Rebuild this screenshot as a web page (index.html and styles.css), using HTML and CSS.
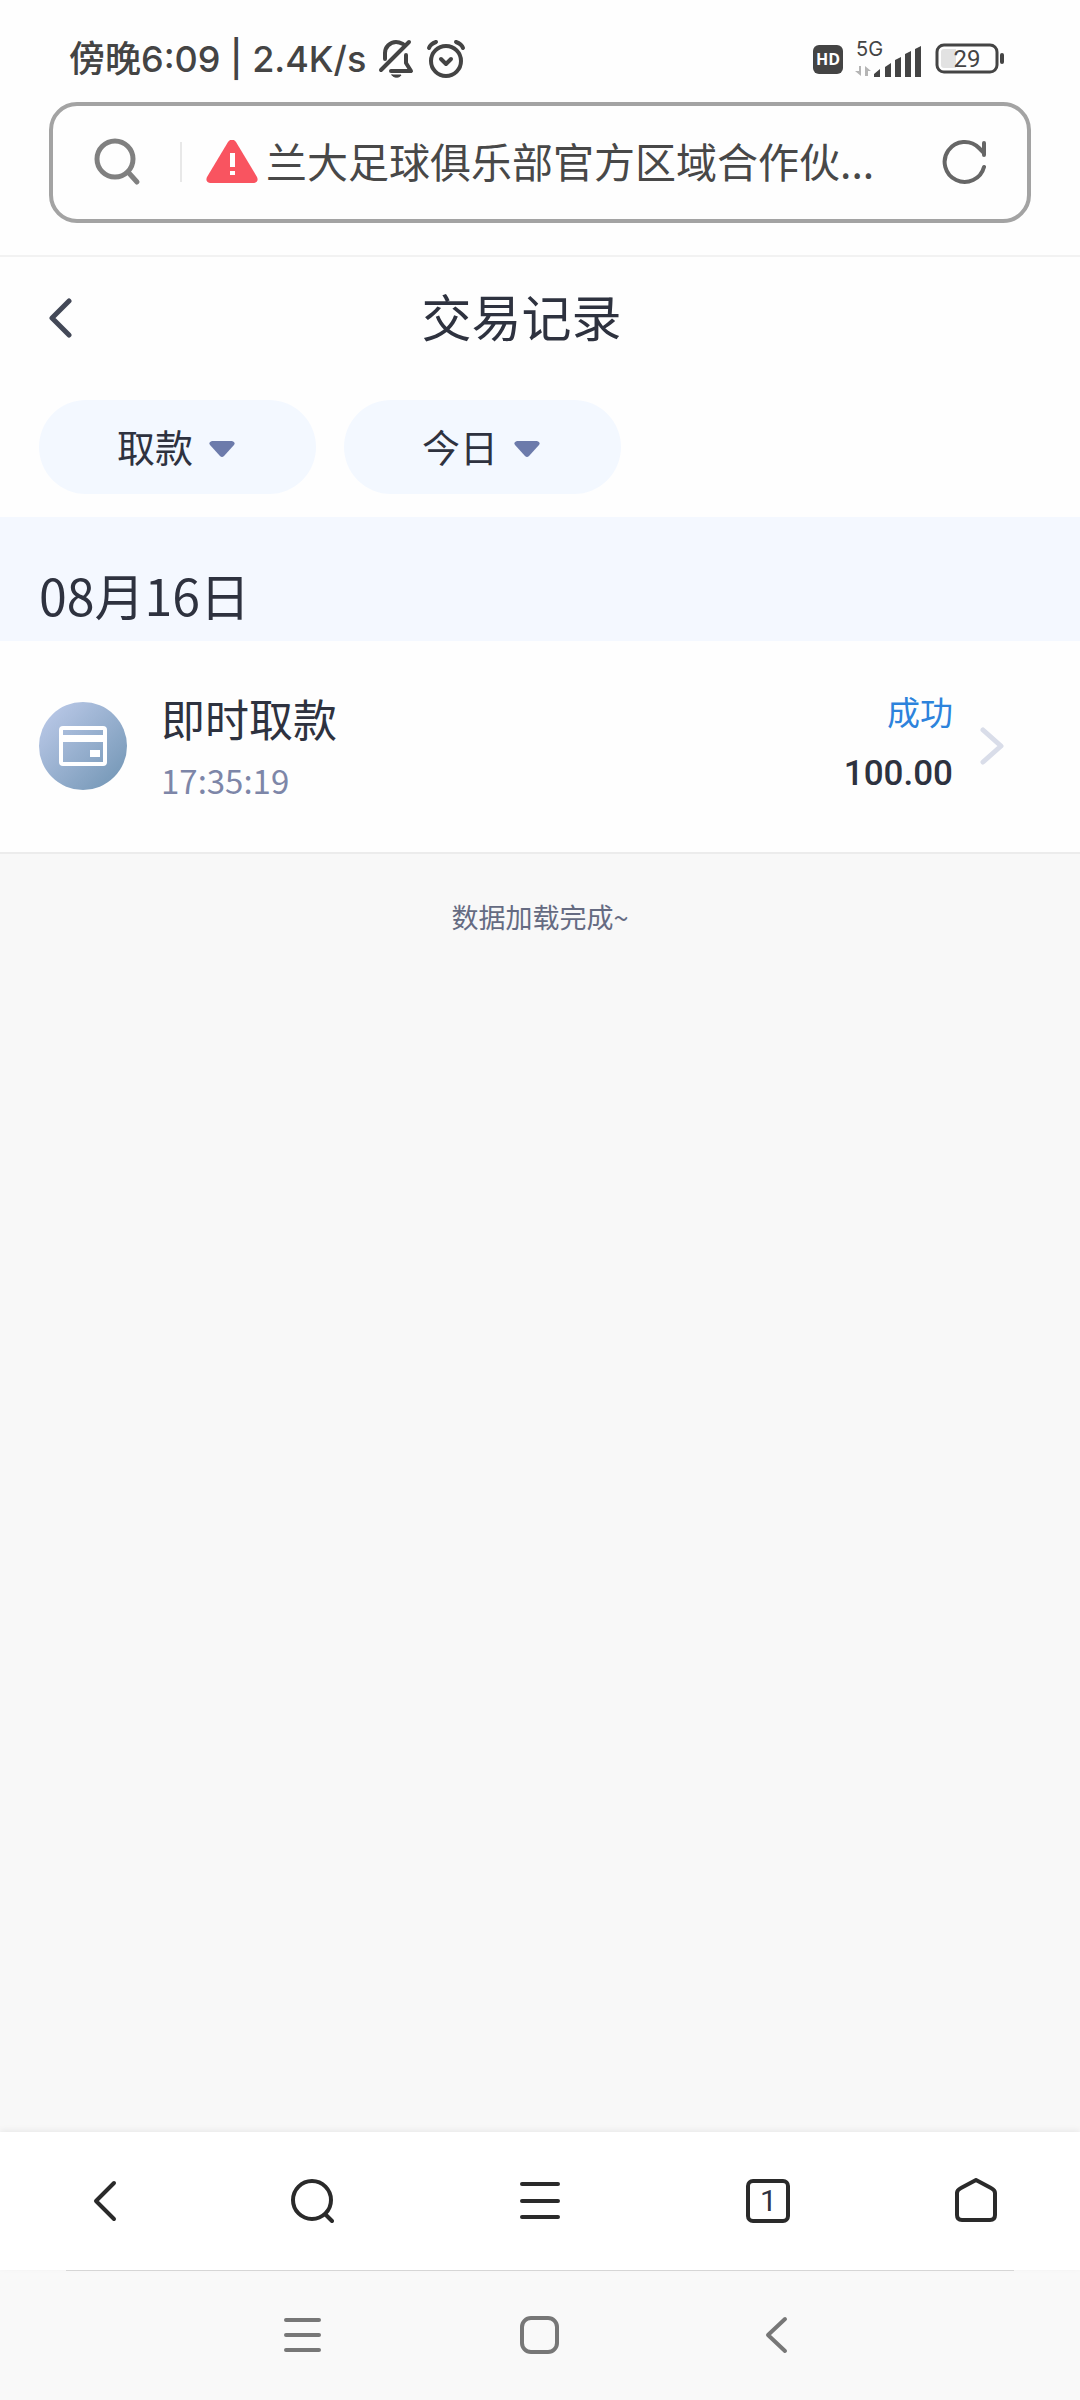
FILE: index.html
```html
<!DOCTYPE html>
<html lang="zh-CN">
<head>
<meta charset="utf-8">
<meta name="viewport" content="width=device-width, initial-scale=1">
<title>交易记录</title>
<link rel="stylesheet" href="styles.css">
</head>
<body>

<div class="status">
  <div class="status-left">
    <span>傍晚6:09 | 2.4K/s</span>
    <svg width="36" height="40" viewBox="0 0 36 40" fill="none" stroke="#444" stroke-width="4" stroke-linecap="round" stroke-linejoin="round">
      <path d="M7 20V14C7 8 12 3 18 3c3 0 5 1 7 2M28 16v8l5 8H13M3 31L31 3"/>
      <path d="M14 36h9c-1 3-8 3-9 0z" fill="#444" stroke-width="1"/>
    </svg>
    <svg width="40" height="40" viewBox="0 0 40 40" fill="none" stroke="#444" stroke-width="4" stroke-linecap="round" stroke-linejoin="round">
      <circle cx="20" cy="22" r="15"/>
      <path d="M15 20l5 5 5-5M3 9c1-3 4-5 7-6M37 9c-1-3-4-5-7-6"/>
    </svg>
  </div>
  <div class="status-right">
    <span class="hd">HD</span>
    <svg width="68" height="48" viewBox="0 -7 68 48">
      <text class="net" x="1" y="14">5G</text>
      <path d="M6 24v10L0 29h4v-5zM10 34V24l6 5h-3v5z" fill="#b5b5b5"/>
      <path d="M19 35v-3l6-5v8zM30 35V25l6-4v14zM40 35V18l6-3v20zM50 35V12l6-3v26zM60 35V7l6-3v31z" fill="#444"/>
    </svg>
    <svg width="70" height="48" viewBox="0 -8 70 48">
      <rect x="2" y="2" width="60" height="27" rx="7" fill="none" stroke="#444" stroke-width="3"/>
      <path d="M9 6h12v19H9q-3 0-3-3V9q0-3 3-3z" fill="#e2e2e2"/>
      <rect x="65" y="10" width="4" height="11" rx="2" fill="#444"/>
      <text class="power" x="32" y="24" text-anchor="middle">29</text>
    </svg>
  </div>
</div>

<div class="address">
  <svg width="48" height="48" viewBox="0 0 48 48" fill="none" stroke="#808080" stroke-width="5" stroke-linecap="round">
    <circle cx="21" cy="21" r="18"/>
    <path d="M34 34l9 10"/>
  </svg>
  <span class="bar"></span>
  <svg width="52" height="44" viewBox="0 0 52 44">
    <path d="M22 2q4-5 8 0l21 35q2 5-3 6H4q-5-1-3-6z" fill="#f95460"/>
    <path d="M24 13h5v14h-5zM24 31h5v4h-5z" fill="#fff"/>
  </svg>
  <input class="url" type="text" aria-label="网址" value="兰大足球俱乐部官方区域合作伙..." readonly>
  <button class="icon" aria-label="刷新">
    <svg width="44" height="46" viewBox="0 0 44 46" fill="none" stroke="#666" stroke-width="4" stroke-linecap="round">
      <path d="M42 28A20 20 0 1 1 37 9l5 5M42 4v12"/>
    </svg>
  </button>
</div>

<div class="header">
  <button class="icon" aria-label="返回">
    <svg width="24" height="40" viewBox="0 0 24 40" fill="none" stroke="#434857" stroke-width="5" stroke-linecap="round" stroke-linejoin="round">
      <path d="M20 3L3 20l17 17"/>
    </svg>
  </button>
  <h1>交易记录</h1>
</div>

<div class="filters">
  <div class="filter">
    <select aria-label="类型">
      <option>取款</option>
    </select>
    <svg class="caret" width="26" height="16" viewBox="0 0 26 16"><path d="M3 0h20q4 1 2 4L15 15q-2 2-4 0L1 4q-2-3 2-4z" fill="#6c7bab"/></svg>
  </div>
  <div class="filter">
    <select aria-label="日期">
      <option>今日</option>
    </select>
    <svg class="caret" width="26" height="16" viewBox="0 0 26 16"><path d="M3 0h20q4 1 2 4L15 15q-2 2-4 0L1 4q-2-3 2-4z" fill="#6c7bab"/></svg>
  </div>
</div>

<main>
  <h2>08月16日</h2>
  <a class="record" href="#">
    <svg width="88" height="88" viewBox="0 0 88 88">
      <defs>
        <linearGradient id="disc" x1="0" y1="0" x2="1" y2="1">
          <stop offset="0.1" stop-color="#b8c7e6"/>
          <stop offset="0.9" stop-color="#7799b8"/>
        </linearGradient>
      </defs>
      <circle cx="44" cy="44" r="44" fill="url(#disc)"/>
      <rect x="22" y="26" width="44" height="36" rx="2" fill="none" stroke="#fff" stroke-width="4"/>
      <path d="M22 33h44v7H22zM51 48h10v7H51z" fill="#fff"/>
    </svg>
    <div class="info">
      <div class="name">即时取款</div>
      <div class="time">17:35:19</div>
    </div>
    <div class="result">
      <div class="state">成功</div>
      <div class="amount">100.00</div>
    </div>
    <svg width="24" height="40" viewBox="0 0 24 40" fill="none" stroke="#d9dde9" stroke-width="5" stroke-linecap="round" stroke-linejoin="round">
      <path d="M3 4l18 16L3 36"/>
    </svg>
  </a>
  <p class="done">数据加载完成~</p>
</main>

<nav class="toolbar">
  <button class="icon" aria-label="后退">
    <svg width="44" height="46" viewBox="0 0 44 46"><path d="M32 5L14 23l18 18"/></svg>
  </button>
  <button class="icon" aria-label="搜索">
    <svg width="44" height="46" viewBox="0 0 44 46"><circle cx="22" cy="22" r="19"/><path d="M36 37l6 6"/></svg>
  </button>
  <button class="icon" aria-label="菜单">
    <svg width="44" height="46" viewBox="0 0 44 46"><path d="M4 6h36M4 23h36M4 39h36"/></svg>
  </button>
  <button class="icon" aria-label="标签页">
    <span class="tabs">1</span>
  </button>
  <button class="icon" aria-label="主页">
    <svg width="44" height="46" viewBox="0 0 44 46"><path d="M22 2l15 8q4 2 4 5v22q0 5-5 5H8q-5 0-5-5V15q0-3 4-5z"/></svg>
  </button>
</nav>

<nav class="system">
  <button class="icon" aria-label="最近任务">
    <svg width="40" height="40" viewBox="0 0 40 40"><path d="M3 5h33M3 20h33M3 35h33"/></svg>
  </button>
  <button class="icon" aria-label="桌面">
    <svg width="40" height="40" viewBox="0 0 40 40"><rect x="2" y="3" width="35" height="34" rx="9"/></svg>
  </button>
  <button class="icon" aria-label="返回上一级">
    <svg width="40" height="40" viewBox="0 0 40 40"><path d="M28 4L11 20l17 16"/></svg>
  </button>
</nav>

</body>
</html>
```
FILE: styles.css
```css
* {
  box-sizing: border-box;
}

body {
  margin: 0;
  min-height: 100vh;
  display: flex;
  flex-direction: column;
  background: #fefefe;
  color: #2e323f;
  font-family: "Noto Sans CJK SC", sans-serif;
}

svg {
  display: block;
  flex: none;
}

h1, h2, p {
  margin: 0;
  font-weight: normal;
}

.icon {
  display: flex;
  align-items: center;
  justify-content: center;
  padding: 0;
  border: none;
  background: none;
  color: inherit;
  cursor: pointer;
}

/* phone status bar */
.status {
  display: flex;
  justify-content: space-between;
  align-items: center;
  height: 102px;
  padding: 16px 75px 0 69px;
  color: #444;
}

.status-left {
  display: flex;
  align-items: center;
  gap: 12px;
  font: 500 36px/48px Inter, "Noto Sans CJK SC", sans-serif;
}

.status-right {
  display: flex;
  align-items: center;
  gap: 12px;
}

.hd {
  width: 30px;
  border-radius: 6px;
  background: #444;
  color: #fff;
  font: bold 16px/29px "Open Sans", sans-serif;
  text-align: center;
}

.net {
  font: 20px Inter, sans-serif;
  fill: #444;
}

.power {
  font: 24px Roboto, sans-serif;
  fill: #444;
}

/* address bar */
.address {
  display: flex;
  align-items: center;
  height: 121px;
  margin: 0 49px 32px;
  padding: 0 41px 2px;
  border: 4px solid #a3a3a3;
  border-radius: 28px;
}

.bar {
  width: 2px;
  height: 40px;
  margin: 0 24px 0 38px;
  background: #e8e8e8;
}

.url {
  flex: 1;
  min-width: 0;
  margin: 0 8px;
  padding: 0 0 4px;
  border: none;
  outline: none;
  background: none;
  color: #484848;
  font: 41px/60px "Noto Sans CJK SC", sans-serif;
}

/* page header */
.header {
  display: flex;
  align-items: center;
  height: 123px;
  padding: 0 110px 0 49px;
  border-top: 2px solid #f2f2f2;
}

.header h1 {
  flex: 1;
  padding-bottom: 6px;
  font-size: 50px;
  line-height: 72px;
  text-align: center;
}

.filters {
  display: flex;
  gap: 28px;
  padding: 22px 39px 23px;
}

.filter {
  position: relative;
}

.filter select {
  width: 277px;
  height: 94px;
  padding: 0 78px 4px;
  border: none;
  border-radius: 47px;
  background: #f3f8ff;
  color: #2e323f;
  font: 38px "Noto Sans CJK SC", sans-serif;
  appearance: none;
}

.caret {
  position: absolute;
  top: 41px;
  right: 81px;
  pointer-events: none;
}

/* list */
main {
  flex: 1;
  background: #f8f8f8;
}

main h2 {
  padding: 41px 39px 11px;
  background: #f4f8ff;
  font-size: 50px;
  line-height: 72px;
}

.record {
  display: flex;
  align-items: center;
  height: 213px;
  padding: 0 76px 2px 39px;
  border-bottom: 2px solid #ececec;
  background: #fefefe;
  color: inherit;
  text-decoration: none;
}

.info {
  flex: 1;
  padding: 4px 0 0 34px;
}

.name {
  font-size: 44px;
  line-height: 64px;
}

.time {
  color: #7d86a8;
  font-size: 33px;
  line-height: 60px;
}

.result {
  margin-right: 27px;
  padding-bottom: 6px;
  text-align: right;
}

.state {
  color: #2d83dc;
  font-size: 33px;
  line-height: 62px;
}

.amount {
  font: 500 35px/64px Roboto, sans-serif;
}

.done {
  padding-top: 43px;
  color: #656b82;
  font-size: 27px;
  line-height: 40px;
  text-align: center;
}

/* browser buttons */
.toolbar {
  position: relative;
  display: grid;
  grid-template-columns: 5fr 5fr 6fr 5fr 5fr;
  height: 138px;
  background: #fff;
  box-shadow: 0 -2px 6px rgba(0, 0, 0, 0.06);
}

.toolbar svg {
  fill: none;
  stroke: #2a2a2a;
  stroke-width: 4;
  stroke-linecap: round;
  stroke-linejoin: round;
}

.tabs {
  width: 44px;
  height: 44px;
  border: 4px solid #2a2a2a;
  border-radius: 7px;
  font: 30px/36px Roboto, sans-serif;
}

/* system buttons */
.system {
  display: flex;
  justify-content: center;
  gap: 197px;
  height: 130px;
  background: linear-gradient(#d9d9d9, #d9d9d9) center top / calc(100% - 132px) 1px no-repeat #f9f9f9;
}

.system svg {
  fill: none;
  stroke: #777;
  stroke-width: 4;
  stroke-linecap: round;
  stroke-linejoin: round;
}
```
